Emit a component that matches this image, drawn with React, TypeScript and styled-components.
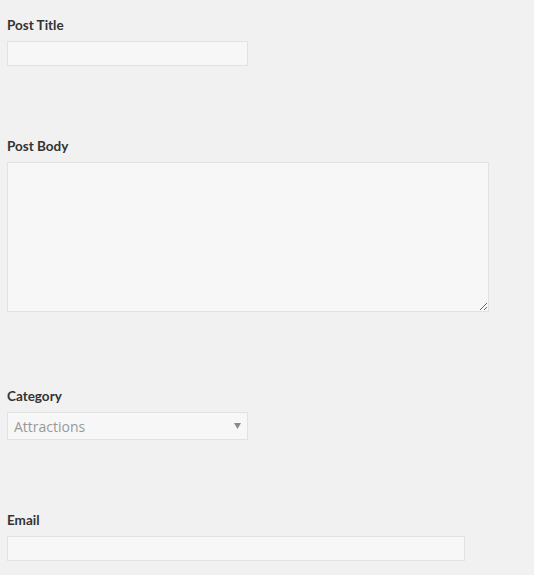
import React from 'react';
import styled, { createGlobalStyle } from 'styled-components';

const GlobalStyle = createGlobalStyle`
  html, body {
    margin: 0;
    padding: 0;
    background: #f1f1f1;
  }
  body {
    font-family: "Open Sans", "Liberation Sans", sans-serif;
    color: #444;
  }
`;

const App = () => {
  return (
    <>
      <GlobalStyle />
      <FormContainer>
        <Field>
          <Label htmlFor="post-title">Post Title</Label>
          <TextInput id="post-title" type="text" width={241} />
        </Field>
        <Field spacing={71}>
          <Label htmlFor="post-body">Post Body</Label>
          <BodyArea id="post-body" />
        </Field>
        <Field spacing={75}>
          <Label htmlFor="category">Category</Label>
          <SelectWrap>
            <StyledSelect id="category" defaultValue="attractions">
              <option value="attractions">Attractions</option>
            </StyledSelect>
            <SelectArrow width="7" height="6" viewBox="0 0 7 6">
              <path d="M0 0 H7 L3.5 6 Z" fill="#8a8a8a" />
            </SelectArrow>
          </SelectWrap>
        </Field>
        <Field spacing={71}>
          <Label htmlFor="email">Email</Label>
          <TextInput id="email" type="email" width={458} />
        </Field>
      </FormContainer>
    </>
  );
};

const FormContainer = styled.form`
  display: flex;
  flex-direction: column;
  padding: 16px 7px 14px;
`;

const Field = styled.div<{ spacing?: number }>`
  display: flex;
  flex-direction: column;
  align-items: flex-start;
  margin-top: ${(p) => p.spacing ?? 0}px;
`;

const Label = styled.label`
  font-family: Lato, "Open Sans", sans-serif;
  font-size: 13.5px;
  line-height: 18px;
  font-weight: 700;
  color: #333;
  margin-bottom: 7px;
`;

const TextInput = styled.input<{ width: number }>`
  box-sizing: border-box;
  width: ${(p) => p.width}px;
  height: 25px;
  margin: 0;
  padding: 3px 6px;
  background: #f7f7f7;
  border: 1px solid #e2e2e2;
  border-radius: 0;
  outline: none;
  font-family: inherit;
  font-size: 13px;
  color: #555;
`;

const BodyArea = styled.textarea`
  box-sizing: border-box;
  width: 482px;
  height: 150px;
  margin: 0;
  padding: 6px;
  background: #f7f7f7;
  border: 1px solid #e2e2e2;
  border-radius: 0;
  outline: none;
  resize: both;
  font-family: inherit;
  font-size: 13px;
  color: #555;
`;

const SelectWrap = styled.div`
  position: relative;
  width: 241px;
  height: 28px;
`;

const StyledSelect = styled.select`
  box-sizing: border-box;
  width: 100%;
  height: 100%;
  margin: 0;
  padding: 0 20px 0 6px;
  appearance: none;
  -webkit-appearance: none;
  background: #f7f7f7;
  border: 1px solid #e2e2e2;
  border-radius: 0;
  outline: none;
  font-family: inherit;
  font-size: 14px;
  color: #999;
`;

const SelectArrow = styled.svg`
  position: absolute;
  top: 11px;
  right: 7px;
  pointer-events: none;
`;

export default App;
